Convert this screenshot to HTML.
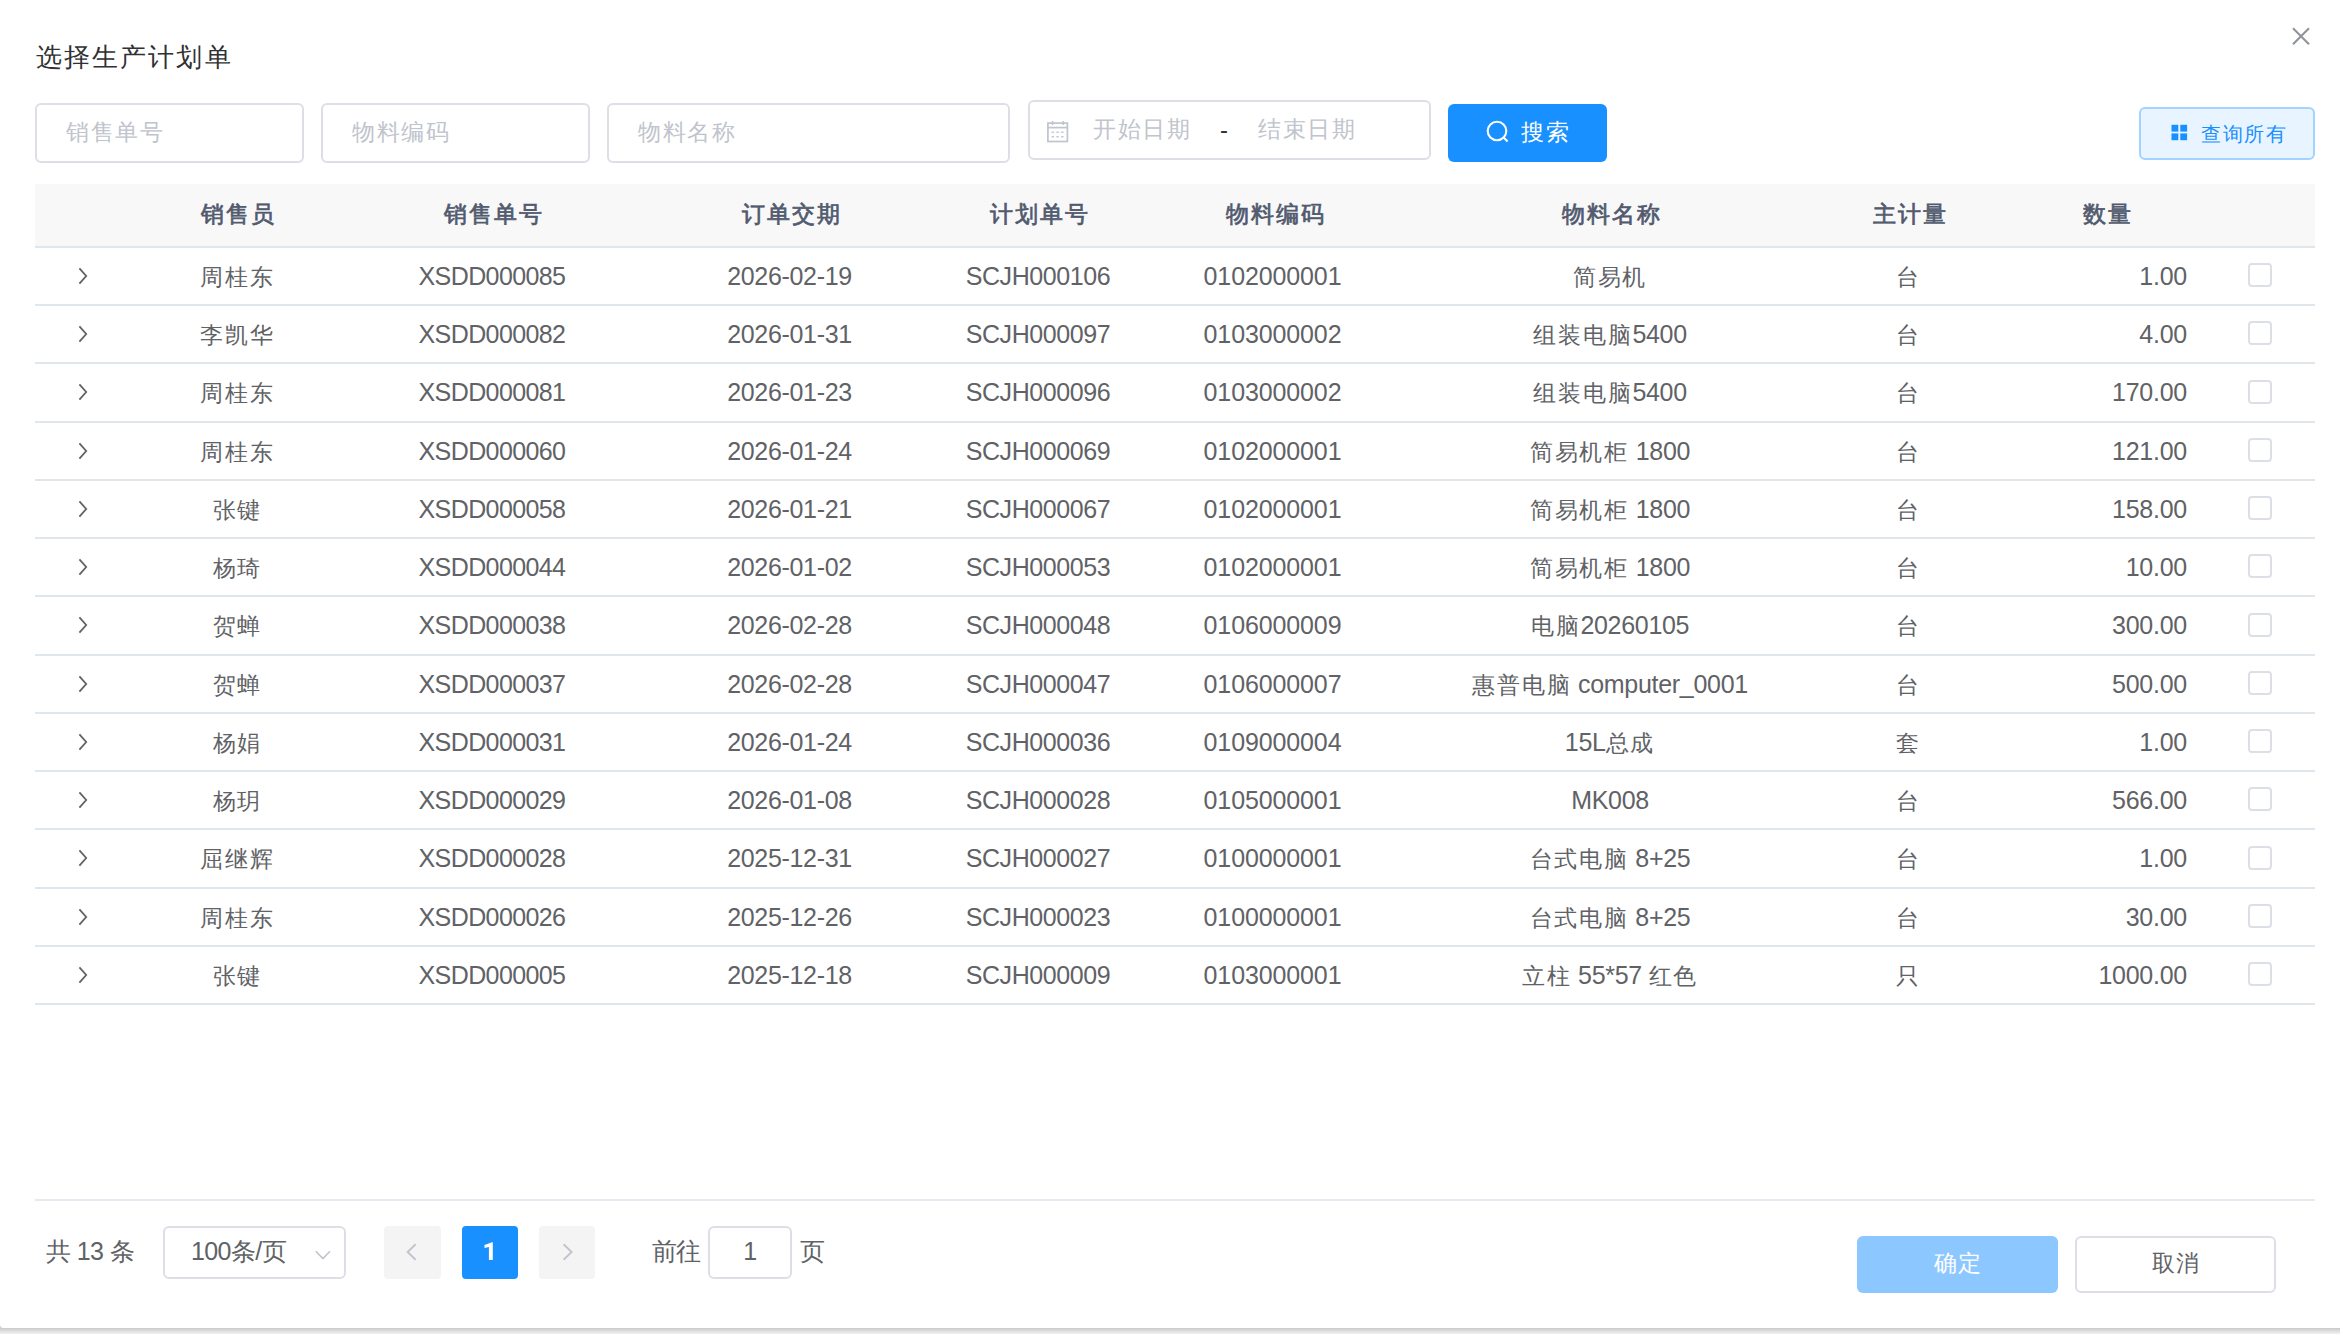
<!DOCTYPE html>
<html><head><meta charset="utf-8"><style>
*{box-sizing:border-box;margin:0;padding:0}
html,body{width:2340px;height:1334px;overflow:hidden;background:#ffffff}
body{position:relative;font-family:"Liberation Sans",sans-serif;color:#606266}
.a{position:absolute}
.c{position:absolute;text-align:center;white-space:nowrap}
.r{position:absolute;text-align:right;white-space:nowrap}
.l{position:absolute;white-space:nowrap}
.box{position:absolute;border:2px solid #dcdfe6;border-radius:6px;background:#fff}
.ph{color:#c0c4cc;font-size:23px;line-height:30px;letter-spacing:1.5px}
.hd{color:#515a6e;font-weight:bold;font-size:25px;line-height:30px;letter-spacing:0px}
.td{color:#606266;font-size:25px;line-height:30px;letter-spacing:-0.6px}
.k{font-size:23px;letter-spacing:1.8px}
.kh{font-size:22.5px;letter-spacing:2.0px;font-weight:400;-webkit-text-stroke:0.7px #515a6e}
.kp{font-size:25px;letter-spacing:0px}
.rowb{position:absolute;left:35px;width:2280px;height:2px;background:#dfe6ec}
.cb{position:absolute;width:24px;height:24px;border:2px solid #dcdfe6;border-radius:4px;background:#fff}
.chev{position:absolute}
</style></head><body>

<div class="l" style="left:36px;top:37px;font-size:26px;line-height:40px;color:#303133;letter-spacing:2.1px">选择生产计划单</div>
<svg class="a" style="left:2290px;top:26px" width="22" height="22" viewBox="0 0 22 22"><path d="M3 2.2L19 18.2M19 2.2L3 18.2" stroke="#909399" stroke-width="2.1" fill="none"/></svg>
<div class="box" style="left:35px;top:103px;width:269px;height:60px"></div>
<div class="l ph" style="left:66px;top:117px">销售单号</div>
<div class="box" style="left:321px;top:103px;width:269px;height:60px"></div>
<div class="l ph" style="left:352px;top:117px">物料编码</div>
<div class="box" style="left:607px;top:103px;width:403px;height:60px"></div>
<div class="l ph" style="left:638px;top:117px">物料名称</div>
<div class="box" style="left:1028px;top:100px;width:403px;height:60px"></div>
<svg class="a" style="left:1046px;top:120px" width="24" height="24" viewBox="0 0 24 24">
<rect x="1.9" y="3.1" width="19.5" height="18.4" fill="none" stroke="#c0c4cc" stroke-width="1.7"/>
<line x1="1.9" y1="7.6" x2="21.4" y2="7.6" stroke="#c0c4cc" stroke-width="1.7"/>
<line x1="6.6" y1="1" x2="6.6" y2="5" stroke="#c0c4cc" stroke-width="1.5"/>
<line x1="17.2" y1="1" x2="17.2" y2="5" stroke="#c0c4cc" stroke-width="1.5"/>
<g fill="#c0c4cc"><rect x="5.5" y="11.6" width="2.6" height="1.3"/><rect x="10.3" y="11.6" width="2.6" height="1.3"/><rect x="15" y="11.6" width="2.6" height="1.3"/>
<rect x="5.5" y="16.1" width="2.6" height="1.3"/><rect x="10.3" y="16.1" width="2.6" height="1.3"/><rect x="15" y="16.1" width="2.6" height="1.3"/></g></svg>
<div class="l ph" style="left:1093px;top:114px">开始日期</div>
<div class="l" style="left:1220px;top:115px;font-size:24px;line-height:30px;color:#303133">-</div>
<div class="l ph" style="left:1258px;top:114px">结束日期</div>
<div class="a" style="left:1448px;top:104px;width:159px;height:58px;background:#1890ff;border-radius:6px"></div>
<svg class="a" style="left:1484px;top:118px" width="28" height="28" viewBox="0 0 28 28"><circle cx="13" cy="13" r="9.3" fill="none" stroke="#fff" stroke-width="2.1"/><path d="M19.6 19.6L23.6 23.6" stroke="#fff" stroke-width="2.1"/></svg>
<div class="l" style="left:1521px;top:117px;font-size:23px;line-height:30px;color:#fff;letter-spacing:1.7px">搜索</div>
<div class="a" style="left:2139px;top:107px;width:176px;height:53px;background:#e8f4ff;border:2px solid #a3d3ff;border-radius:6px"></div>
<svg class="a" style="left:2171px;top:124px" width="18" height="18" viewBox="0 0 18 18"><g fill="#1890ff"><rect x="0.5" y="0.8" width="6.8" height="6.8"/><rect x="9.3" y="0.8" width="6.8" height="6.8"/><rect x="0.5" y="9.4" width="6.8" height="6.8"/><rect x="9.3" y="9.4" width="6.8" height="6.8"/></g></svg>
<div class="l" style="left:2201px;top:119px;font-size:19.5px;line-height:30px;color:#1890ff;letter-spacing:1.5px">查询所有</div>
<div class="a" style="left:35px;top:184px;width:2280px;height:62px;background:#f8f8f9"></div>
<div class="rowb" style="top:246px"></div>
<div class="c hd" style="left:88.60px;top:198.00px;width:300px"><span class="kh">销售员</span></div>
<div class="c hd" style="left:343.80px;top:198.00px;width:300px"><span class="kh">销售单号</span></div>
<div class="c hd" style="left:641.70px;top:198.00px;width:300px"><span class="kh">订单交期</span></div>
<div class="c hd" style="left:889.80px;top:198.00px;width:300px"><span class="kh">计划单号</span></div>
<div class="c hd" style="left:1125.80px;top:198.00px;width:300px"><span class="kh">物料编码</span></div>
<div class="c hd" style="left:1462.20px;top:198.00px;width:300px"><span class="kh">物料名称</span></div>
<div class="c hd" style="left:1760.00px;top:198.00px;width:300px"><span class="kh">主计量</span></div>
<div class="c hd" style="left:1957.60px;top:198.00px;width:300px"><span class="kh">数量</span></div>
<div class="rowb" style="top:304px"></div>
<svg class="a" style="left:76px;top:265.50px" width="14" height="20" viewBox="0 0 14 20"><path d="M3.4 2.4L10.2 10L3.4 17.6" fill="none" stroke="#606266" stroke-width="1.8"/></svg>
<div class="c td" style="left:-12.60px;top:260.70px;width:500px"><span class="k">周桂东</span></div>
<div class="c td" style="left:242.00px;top:260.70px;width:500px;letter-spacing:-0.6px">XSDD000085</div>
<div class="c td" style="left:539.50px;top:260.70px;width:500px;letter-spacing:-0.32px">2026-02-19</div>
<div class="c td" style="left:788.00px;top:260.70px;width:500px;letter-spacing:-0.42px">SCJH000106</div>
<div class="c td" style="left:1022.50px;top:260.70px;width:500px;letter-spacing:-0.12px">0102000001</div>
<div class="c td" style="left:1360.00px;top:260.70px;width:500px;letter-spacing:-0.3px"><span class="k">简易机</span></div>
<div class="c td" style="left:1658.90px;top:260.70px;width:500px"><span class="k">台</span></div>
<div class="r td" style="left:1887px;top:260.70px;width:300px;letter-spacing:-0.25px">1.00</div>
<div class="cb" style="left:2248px;top:263px"></div>
<div class="rowb" style="top:362px"></div>
<svg class="a" style="left:76px;top:323.50px" width="14" height="20" viewBox="0 0 14 20"><path d="M3.4 2.4L10.2 10L3.4 17.6" fill="none" stroke="#606266" stroke-width="1.8"/></svg>
<div class="c td" style="left:-12.60px;top:318.70px;width:500px"><span class="k">李凯华</span></div>
<div class="c td" style="left:242.00px;top:318.70px;width:500px;letter-spacing:-0.6px">XSDD000082</div>
<div class="c td" style="left:539.50px;top:318.70px;width:500px;letter-spacing:-0.32px">2026-01-31</div>
<div class="c td" style="left:788.00px;top:318.70px;width:500px;letter-spacing:-0.42px">SCJH000097</div>
<div class="c td" style="left:1022.50px;top:318.70px;width:500px;letter-spacing:-0.12px">0103000002</div>
<div class="c td" style="left:1360.00px;top:318.70px;width:500px;letter-spacing:-0.3px"><span class="k">组装电脑</span>5400</div>
<div class="c td" style="left:1658.90px;top:318.70px;width:500px"><span class="k">台</span></div>
<div class="r td" style="left:1887px;top:318.70px;width:300px;letter-spacing:-0.25px">4.00</div>
<div class="cb" style="left:2248px;top:321px"></div>
<div class="rowb" style="top:421px"></div>
<svg class="a" style="left:76px;top:382.00px" width="14" height="20" viewBox="0 0 14 20"><path d="M3.4 2.4L10.2 10L3.4 17.6" fill="none" stroke="#606266" stroke-width="1.8"/></svg>
<div class="c td" style="left:-12.60px;top:377.20px;width:500px"><span class="k">周桂东</span></div>
<div class="c td" style="left:242.00px;top:377.20px;width:500px;letter-spacing:-0.6px">XSDD000081</div>
<div class="c td" style="left:539.50px;top:377.20px;width:500px;letter-spacing:-0.32px">2026-01-23</div>
<div class="c td" style="left:788.00px;top:377.20px;width:500px;letter-spacing:-0.42px">SCJH000096</div>
<div class="c td" style="left:1022.50px;top:377.20px;width:500px;letter-spacing:-0.12px">0103000002</div>
<div class="c td" style="left:1360.00px;top:377.20px;width:500px;letter-spacing:-0.3px"><span class="k">组装电脑</span>5400</div>
<div class="c td" style="left:1658.90px;top:377.20px;width:500px"><span class="k">台</span></div>
<div class="r td" style="left:1887px;top:377.20px;width:300px;letter-spacing:-0.25px">170.00</div>
<div class="cb" style="left:2248px;top:380px"></div>
<div class="rowb" style="top:479px"></div>
<svg class="a" style="left:76px;top:440.50px" width="14" height="20" viewBox="0 0 14 20"><path d="M3.4 2.4L10.2 10L3.4 17.6" fill="none" stroke="#606266" stroke-width="1.8"/></svg>
<div class="c td" style="left:-12.60px;top:435.70px;width:500px"><span class="k">周桂东</span></div>
<div class="c td" style="left:242.00px;top:435.70px;width:500px;letter-spacing:-0.6px">XSDD000060</div>
<div class="c td" style="left:539.50px;top:435.70px;width:500px;letter-spacing:-0.32px">2026-01-24</div>
<div class="c td" style="left:788.00px;top:435.70px;width:500px;letter-spacing:-0.42px">SCJH000069</div>
<div class="c td" style="left:1022.50px;top:435.70px;width:500px;letter-spacing:-0.12px">0102000001</div>
<div class="c td" style="left:1360.00px;top:435.70px;width:500px;letter-spacing:-0.3px"><span class="k">简易机柜</span> 1800</div>
<div class="c td" style="left:1658.90px;top:435.70px;width:500px"><span class="k">台</span></div>
<div class="r td" style="left:1887px;top:435.70px;width:300px;letter-spacing:-0.25px">121.00</div>
<div class="cb" style="left:2248px;top:438px"></div>
<div class="rowb" style="top:537px"></div>
<svg class="a" style="left:76px;top:498.50px" width="14" height="20" viewBox="0 0 14 20"><path d="M3.4 2.4L10.2 10L3.4 17.6" fill="none" stroke="#606266" stroke-width="1.8"/></svg>
<div class="c td" style="left:-12.60px;top:493.70px;width:500px"><span class="k">张键</span></div>
<div class="c td" style="left:242.00px;top:493.70px;width:500px;letter-spacing:-0.6px">XSDD000058</div>
<div class="c td" style="left:539.50px;top:493.70px;width:500px;letter-spacing:-0.32px">2026-01-21</div>
<div class="c td" style="left:788.00px;top:493.70px;width:500px;letter-spacing:-0.42px">SCJH000067</div>
<div class="c td" style="left:1022.50px;top:493.70px;width:500px;letter-spacing:-0.12px">0102000001</div>
<div class="c td" style="left:1360.00px;top:493.70px;width:500px;letter-spacing:-0.3px"><span class="k">简易机柜</span> 1800</div>
<div class="c td" style="left:1658.90px;top:493.70px;width:500px"><span class="k">台</span></div>
<div class="r td" style="left:1887px;top:493.70px;width:300px;letter-spacing:-0.25px">158.00</div>
<div class="cb" style="left:2248px;top:496px"></div>
<div class="rowb" style="top:595px"></div>
<svg class="a" style="left:76px;top:556.50px" width="14" height="20" viewBox="0 0 14 20"><path d="M3.4 2.4L10.2 10L3.4 17.6" fill="none" stroke="#606266" stroke-width="1.8"/></svg>
<div class="c td" style="left:-12.60px;top:551.70px;width:500px"><span class="k">杨琦</span></div>
<div class="c td" style="left:242.00px;top:551.70px;width:500px;letter-spacing:-0.6px">XSDD000044</div>
<div class="c td" style="left:539.50px;top:551.70px;width:500px;letter-spacing:-0.32px">2026-01-02</div>
<div class="c td" style="left:788.00px;top:551.70px;width:500px;letter-spacing:-0.42px">SCJH000053</div>
<div class="c td" style="left:1022.50px;top:551.70px;width:500px;letter-spacing:-0.12px">0102000001</div>
<div class="c td" style="left:1360.00px;top:551.70px;width:500px;letter-spacing:-0.3px"><span class="k">简易机柜</span> 1800</div>
<div class="c td" style="left:1658.90px;top:551.70px;width:500px"><span class="k">台</span></div>
<div class="r td" style="left:1887px;top:551.70px;width:300px;letter-spacing:-0.25px">10.00</div>
<div class="cb" style="left:2248px;top:554px"></div>
<div class="rowb" style="top:654px"></div>
<svg class="a" style="left:76px;top:615.00px" width="14" height="20" viewBox="0 0 14 20"><path d="M3.4 2.4L10.2 10L3.4 17.6" fill="none" stroke="#606266" stroke-width="1.8"/></svg>
<div class="c td" style="left:-12.60px;top:610.20px;width:500px"><span class="k">贺蝉</span></div>
<div class="c td" style="left:242.00px;top:610.20px;width:500px;letter-spacing:-0.6px">XSDD000038</div>
<div class="c td" style="left:539.50px;top:610.20px;width:500px;letter-spacing:-0.32px">2026-02-28</div>
<div class="c td" style="left:788.00px;top:610.20px;width:500px;letter-spacing:-0.42px">SCJH000048</div>
<div class="c td" style="left:1022.50px;top:610.20px;width:500px;letter-spacing:-0.12px">0106000009</div>
<div class="c td" style="left:1360.00px;top:610.20px;width:500px;letter-spacing:-0.3px"><span class="k">电脑</span>20260105</div>
<div class="c td" style="left:1658.90px;top:610.20px;width:500px"><span class="k">台</span></div>
<div class="r td" style="left:1887px;top:610.20px;width:300px;letter-spacing:-0.25px">300.00</div>
<div class="cb" style="left:2248px;top:613px"></div>
<div class="rowb" style="top:712px"></div>
<svg class="a" style="left:76px;top:673.50px" width="14" height="20" viewBox="0 0 14 20"><path d="M3.4 2.4L10.2 10L3.4 17.6" fill="none" stroke="#606266" stroke-width="1.8"/></svg>
<div class="c td" style="left:-12.60px;top:668.70px;width:500px"><span class="k">贺蝉</span></div>
<div class="c td" style="left:242.00px;top:668.70px;width:500px;letter-spacing:-0.6px">XSDD000037</div>
<div class="c td" style="left:539.50px;top:668.70px;width:500px;letter-spacing:-0.32px">2026-02-28</div>
<div class="c td" style="left:788.00px;top:668.70px;width:500px;letter-spacing:-0.42px">SCJH000047</div>
<div class="c td" style="left:1022.50px;top:668.70px;width:500px;letter-spacing:-0.12px">0106000007</div>
<div class="c td" style="left:1360.00px;top:668.70px;width:500px;letter-spacing:-0.3px"><span class="k">惠普电脑</span> computer_0001</div>
<div class="c td" style="left:1658.90px;top:668.70px;width:500px"><span class="k">台</span></div>
<div class="r td" style="left:1887px;top:668.70px;width:300px;letter-spacing:-0.25px">500.00</div>
<div class="cb" style="left:2248px;top:671px"></div>
<div class="rowb" style="top:770px"></div>
<svg class="a" style="left:76px;top:731.50px" width="14" height="20" viewBox="0 0 14 20"><path d="M3.4 2.4L10.2 10L3.4 17.6" fill="none" stroke="#606266" stroke-width="1.8"/></svg>
<div class="c td" style="left:-12.60px;top:726.70px;width:500px"><span class="k">杨娟</span></div>
<div class="c td" style="left:242.00px;top:726.70px;width:500px;letter-spacing:-0.6px">XSDD000031</div>
<div class="c td" style="left:539.50px;top:726.70px;width:500px;letter-spacing:-0.32px">2026-01-24</div>
<div class="c td" style="left:788.00px;top:726.70px;width:500px;letter-spacing:-0.42px">SCJH000036</div>
<div class="c td" style="left:1022.50px;top:726.70px;width:500px;letter-spacing:-0.12px">0109000004</div>
<div class="c td" style="left:1360.00px;top:726.70px;width:500px;letter-spacing:-0.3px">15L<span class="k">总成</span></div>
<div class="c td" style="left:1658.90px;top:726.70px;width:500px"><span class="k">套</span></div>
<div class="r td" style="left:1887px;top:726.70px;width:300px;letter-spacing:-0.25px">1.00</div>
<div class="cb" style="left:2248px;top:729px"></div>
<div class="rowb" style="top:828px"></div>
<svg class="a" style="left:76px;top:789.50px" width="14" height="20" viewBox="0 0 14 20"><path d="M3.4 2.4L10.2 10L3.4 17.6" fill="none" stroke="#606266" stroke-width="1.8"/></svg>
<div class="c td" style="left:-12.60px;top:784.70px;width:500px"><span class="k">杨玥</span></div>
<div class="c td" style="left:242.00px;top:784.70px;width:500px;letter-spacing:-0.6px">XSDD000029</div>
<div class="c td" style="left:539.50px;top:784.70px;width:500px;letter-spacing:-0.32px">2026-01-08</div>
<div class="c td" style="left:788.00px;top:784.70px;width:500px;letter-spacing:-0.42px">SCJH000028</div>
<div class="c td" style="left:1022.50px;top:784.70px;width:500px;letter-spacing:-0.12px">0105000001</div>
<div class="c td" style="left:1360.00px;top:784.70px;width:500px;letter-spacing:-0.3px">MK008</div>
<div class="c td" style="left:1658.90px;top:784.70px;width:500px"><span class="k">台</span></div>
<div class="r td" style="left:1887px;top:784.70px;width:300px;letter-spacing:-0.25px">566.00</div>
<div class="cb" style="left:2248px;top:787px"></div>
<div class="rowb" style="top:887px"></div>
<svg class="a" style="left:76px;top:848.00px" width="14" height="20" viewBox="0 0 14 20"><path d="M3.4 2.4L10.2 10L3.4 17.6" fill="none" stroke="#606266" stroke-width="1.8"/></svg>
<div class="c td" style="left:-12.60px;top:843.20px;width:500px"><span class="k">屈继辉</span></div>
<div class="c td" style="left:242.00px;top:843.20px;width:500px;letter-spacing:-0.6px">XSDD000028</div>
<div class="c td" style="left:539.50px;top:843.20px;width:500px;letter-spacing:-0.32px">2025-12-31</div>
<div class="c td" style="left:788.00px;top:843.20px;width:500px;letter-spacing:-0.42px">SCJH000027</div>
<div class="c td" style="left:1022.50px;top:843.20px;width:500px;letter-spacing:-0.12px">0100000001</div>
<div class="c td" style="left:1360.00px;top:843.20px;width:500px;letter-spacing:-0.3px"><span class="k">台式电脑</span> 8+25</div>
<div class="c td" style="left:1658.90px;top:843.20px;width:500px"><span class="k">台</span></div>
<div class="r td" style="left:1887px;top:843.20px;width:300px;letter-spacing:-0.25px">1.00</div>
<div class="cb" style="left:2248px;top:846px"></div>
<div class="rowb" style="top:945px"></div>
<svg class="a" style="left:76px;top:906.50px" width="14" height="20" viewBox="0 0 14 20"><path d="M3.4 2.4L10.2 10L3.4 17.6" fill="none" stroke="#606266" stroke-width="1.8"/></svg>
<div class="c td" style="left:-12.60px;top:901.70px;width:500px"><span class="k">周桂东</span></div>
<div class="c td" style="left:242.00px;top:901.70px;width:500px;letter-spacing:-0.6px">XSDD000026</div>
<div class="c td" style="left:539.50px;top:901.70px;width:500px;letter-spacing:-0.32px">2025-12-26</div>
<div class="c td" style="left:788.00px;top:901.70px;width:500px;letter-spacing:-0.42px">SCJH000023</div>
<div class="c td" style="left:1022.50px;top:901.70px;width:500px;letter-spacing:-0.12px">0100000001</div>
<div class="c td" style="left:1360.00px;top:901.70px;width:500px;letter-spacing:-0.3px"><span class="k">台式电脑</span> 8+25</div>
<div class="c td" style="left:1658.90px;top:901.70px;width:500px"><span class="k">台</span></div>
<div class="r td" style="left:1887px;top:901.70px;width:300px;letter-spacing:-0.25px">30.00</div>
<div class="cb" style="left:2248px;top:904px"></div>
<div class="rowb" style="top:1003px"></div>
<svg class="a" style="left:76px;top:964.50px" width="14" height="20" viewBox="0 0 14 20"><path d="M3.4 2.4L10.2 10L3.4 17.6" fill="none" stroke="#606266" stroke-width="1.8"/></svg>
<div class="c td" style="left:-12.60px;top:959.70px;width:500px"><span class="k">张键</span></div>
<div class="c td" style="left:242.00px;top:959.70px;width:500px;letter-spacing:-0.6px">XSDD000005</div>
<div class="c td" style="left:539.50px;top:959.70px;width:500px;letter-spacing:-0.32px">2025-12-18</div>
<div class="c td" style="left:788.00px;top:959.70px;width:500px;letter-spacing:-0.42px">SCJH000009</div>
<div class="c td" style="left:1022.50px;top:959.70px;width:500px;letter-spacing:-0.12px">0103000001</div>
<div class="c td" style="left:1360.00px;top:959.70px;width:500px;letter-spacing:-0.3px"><span class="k">立柱</span> 55*57 <span class="k">红色</span></div>
<div class="c td" style="left:1658.90px;top:959.70px;width:500px"><span class="k">只</span></div>
<div class="r td" style="left:1887px;top:959.70px;width:300px;letter-spacing:-0.25px">1000.00</div>
<div class="cb" style="left:2248px;top:962px"></div>
<div class="a" style="left:35px;top:1199px;width:2280px;height:2px;background:#e4e8f1"></div>
<div class="l td" style="left:46px;top:1236px;font-size:25px">共 13 条</div>
<div class="box" style="left:163px;top:1226px;width:183px;height:53px"></div>
<div class="l td" style="left:191px;top:1236px">100条/页</div>
<svg class="a" style="left:313px;top:1248px" width="20" height="14" viewBox="0 0 20 14"><path d="M2.8 3.2L9.9 10.6L17 3.2" fill="none" stroke="#c0c4cc" stroke-width="1.6"/></svg>
<div class="a" style="left:384px;top:1226px;width:57px;height:53px;background:#f4f4f5;border-radius:4px"></div>
<svg class="a" style="left:402px;top:1242px" width="20" height="20" viewBox="0 0 20 20"><path d="M13.6 2.2L5.6 10L13.6 17.8" fill="none" stroke="#c0c4cc" stroke-width="1.9"/></svg>
<div class="a" style="left:462px;top:1226px;width:56px;height:53px;background:#1890ff;border-radius:4px"></div>
<svg class="a" style="left:482px;top:1240px" width="14" height="24" viewBox="0 0 14 24"><path d="M6.9 2.3H10.8V20.0H6.9V6.9L2.5 8.1V5.1L9.9 2.3Z" fill="#fff"/></svg>
<div class="a" style="left:539px;top:1226px;width:56px;height:53px;background:#f4f4f5;border-radius:4px"></div>
<svg class="a" style="left:558px;top:1242px" width="20" height="20" viewBox="0 0 20 20"><path d="M5.6 2.2L13.6 10L5.6 17.8" fill="none" stroke="#c0c4cc" stroke-width="1.9"/></svg>
<div class="l td" style="left:652px;top:1236px">前往</div>
<div class="box" style="left:708px;top:1226px;width:84px;height:53px"></div>
<div class="c td" style="left:708px;top:1236px;width:84px">1</div>
<div class="l td" style="left:800px;top:1236px">页</div>
<div class="a" style="left:1857px;top:1236px;width:201px;height:57px;background:#8cc8ff;border-radius:6px"></div>
<div class="c" style="left:1857px;top:1248px;width:201px;font-size:23px;line-height:30px;color:#fff;letter-spacing:1.7px;padding-left:1.7px">确定</div>
<div class="box" style="left:2075px;top:1236px;width:201px;height:57px"></div>
<div class="c" style="left:2075px;top:1248px;width:201px;font-size:23px;line-height:30px;color:#606266;letter-spacing:1.7px;padding-left:1.7px">取消</div>
<div class="a" style="left:0;top:1328px;width:2340px;height:6px;background:linear-gradient(#c9c9c9,#d2d2d2 20%,#dcdcdc 45%,#e6e6e6 70%,#f1f1f1)"></div>
<div class="a" style="left:0;top:1320px;width:6px;height:8px;background:linear-gradient(to right,#cfcfcf,#e8e8e8 60%,#f6f6f6)"></div>
<div class="a" style="left:0;top:1300px;width:40px;height:28px;background:#fff;border-bottom-left-radius:4px"></div>
</body></html>
